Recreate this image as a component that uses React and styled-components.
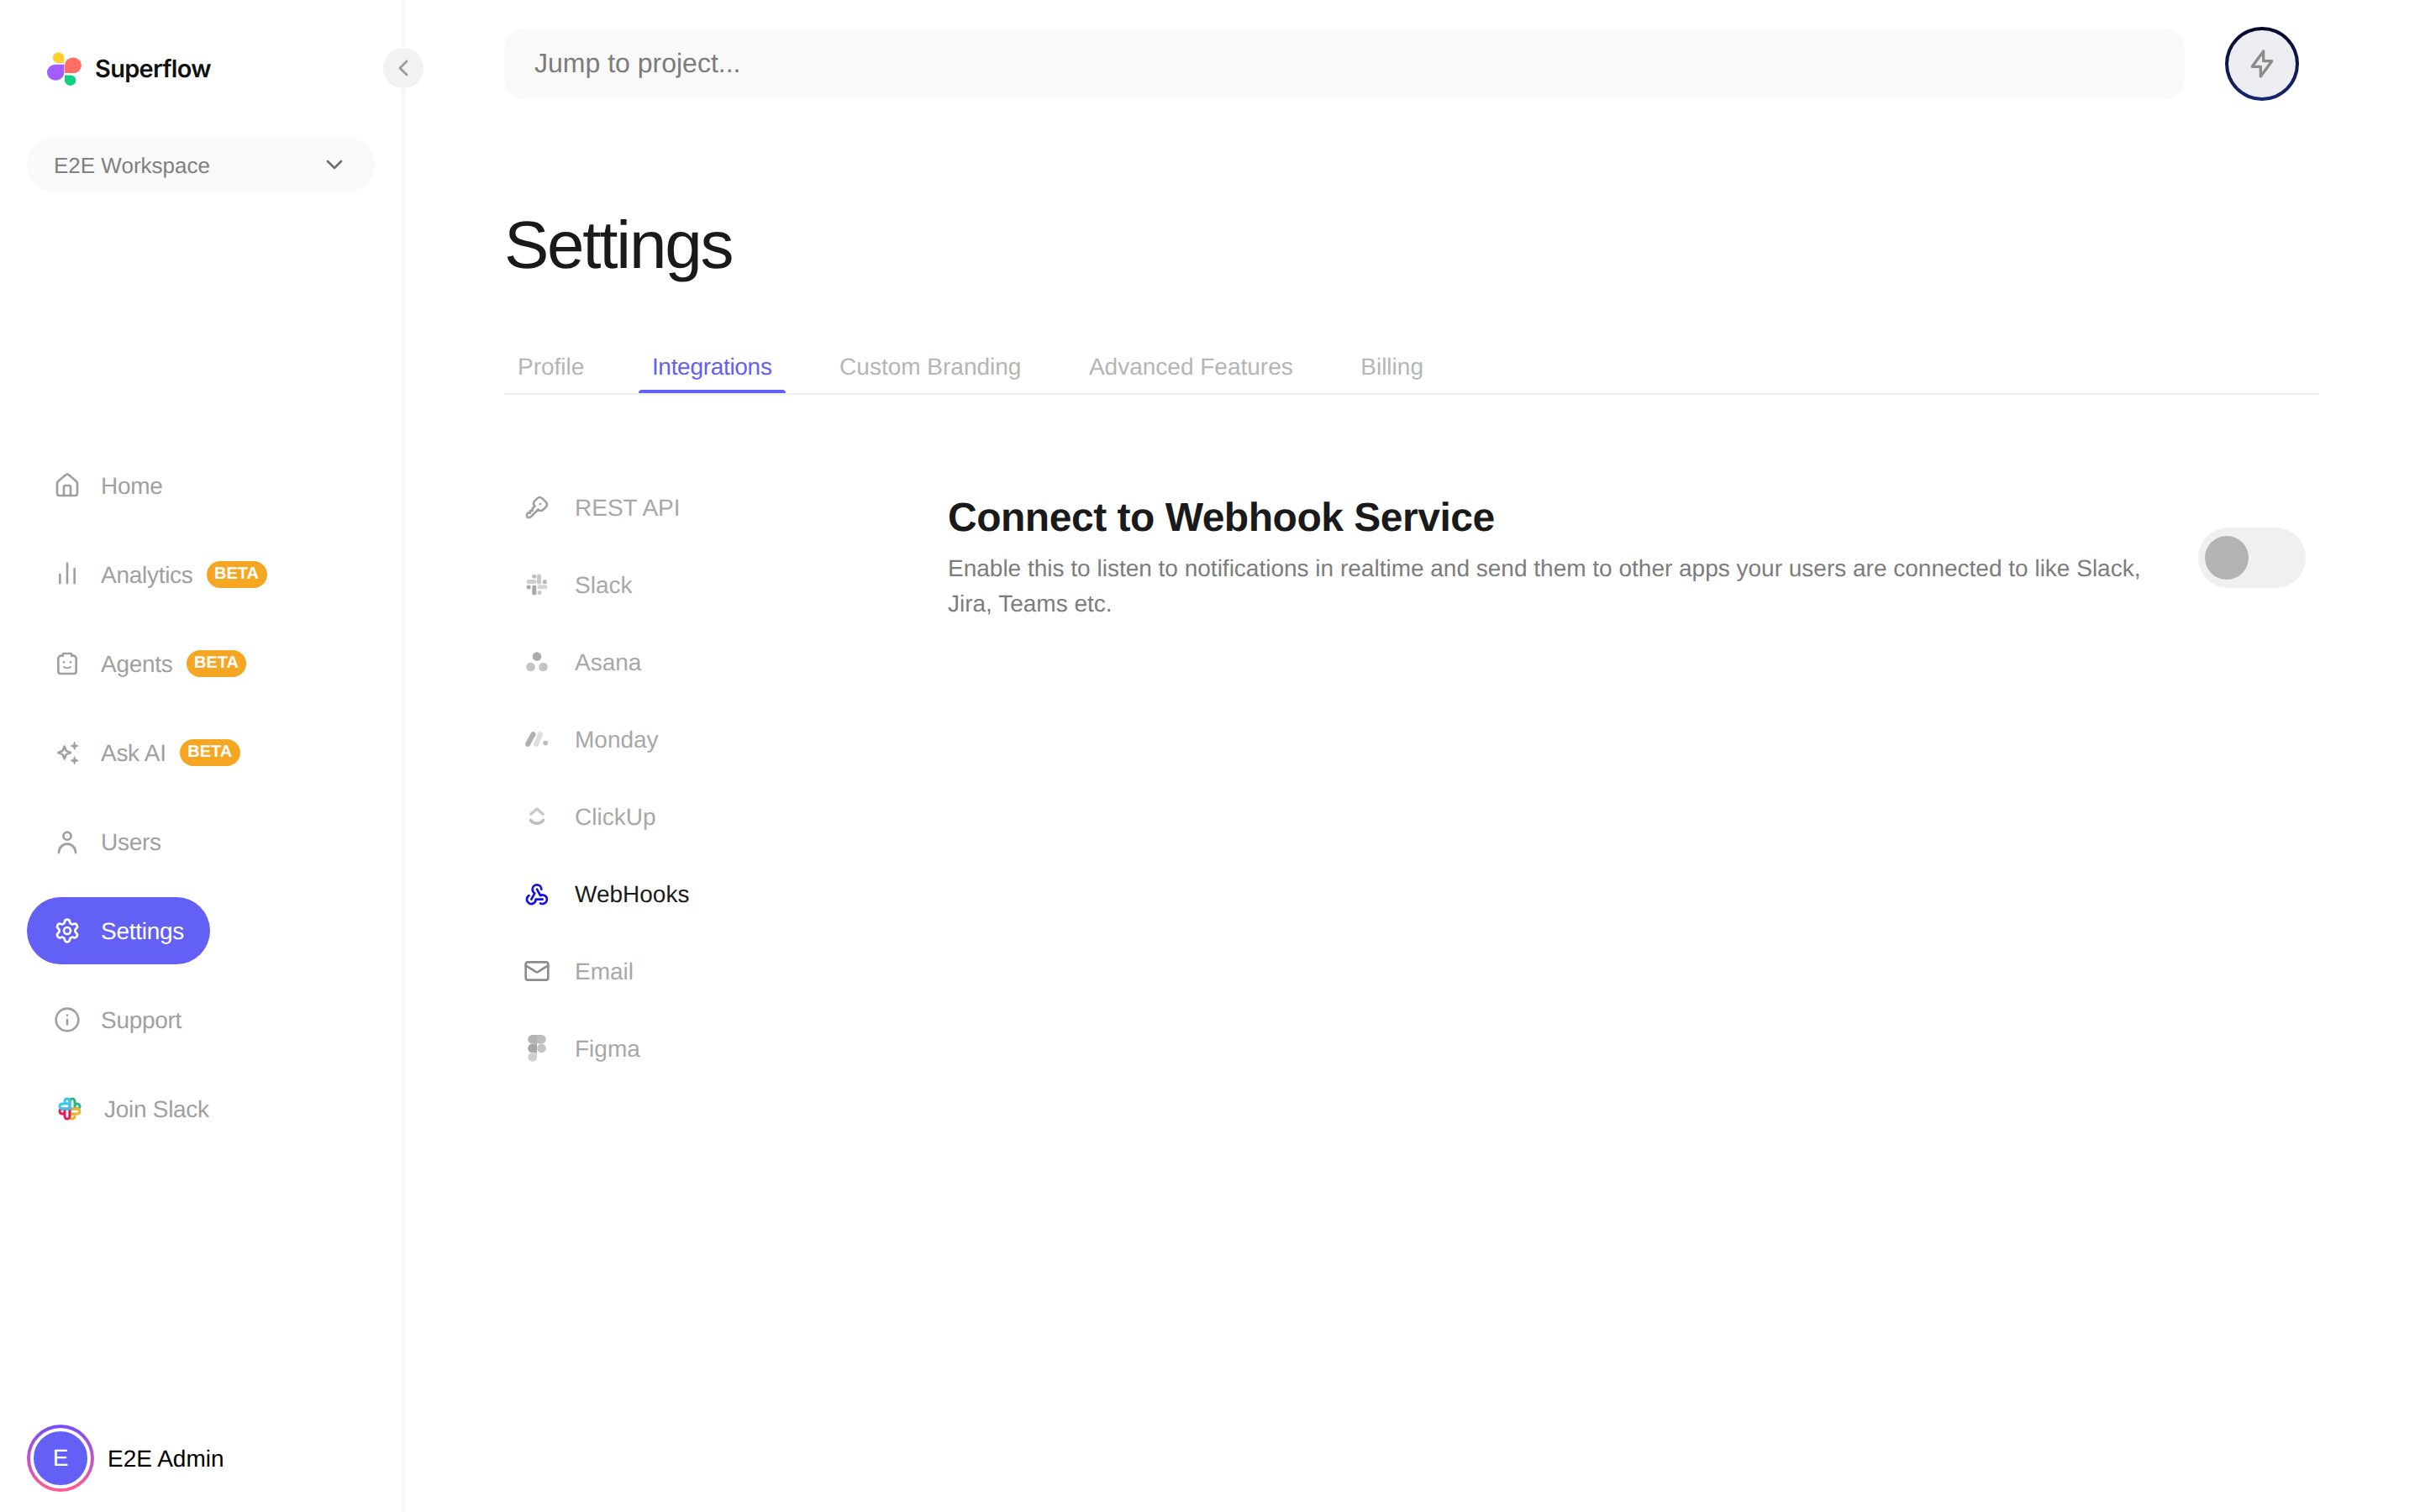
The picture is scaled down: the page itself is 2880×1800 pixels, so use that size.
import React from "react";
import styled, { createGlobalStyle } from "styled-components";
import { ChevronDown, ChevronLeft, House, Info, Mail, Settings as Gear } from "lucide-react";
import { TbBolt, TbKey, TbWebhook } from "react-icons/tb";

const Global = createGlobalStyle`
   html, body {
      margin: 0;
      padding: 0;
      background: #fff;
   }
   body {
      font-family: "Liberation Sans", Arial, sans-serif;
      text-rendering: geometricPrecision;
   }
   * {
      box-sizing: border-box;
   }
`;

const Page = styled.div`
   display: flex;
   width: 2880px;
   height: 1800px;
   overflow: hidden;
`;

const Sidebar = styled.aside`
   position: relative;
   flex: 0 0 482px;
   display: flex;
   flex-direction: column;
   padding: 62px 0 24px 32px;
   border-right: 4px solid #f8f8f8;
`;

const Brand = styled.div`
   display: flex;
   align-items: center;
   gap: 16px;
   height: 40px;
   padding-left: 24px;
`;

const BrandName = styled.span`
   margin-top: -2px;
   font-family: Inter, sans-serif;
   font-size: 29px;
   font-weight: 600;
   letter-spacing: -0.025em;
   color: #111;
`;

const Collapse = styled.button`
   position: absolute;
   top: 57px;
   right: -26px;
   width: 48px;
   height: 48px;
   display: flex;
   align-items: center;
   justify-content: center;
   padding: 0;
   border: none;
   border-radius: 50%;
   background: #f2f2f2;
   color: #999;
`;

const Workspace = styled.div`
   display: flex;
   align-items: center;
   justify-content: space-between;
   width: 414px;
   height: 64px;
   margin-top: 62px;
   padding: 0 32px;
   border-radius: 32px;
   background: #f9f9f9;
   font-size: 26px;
   color: #808080;
   svg {
      color: #6f6f6f;
   }
`;

const WorkspaceName = styled.span`
   padding-top: 3px;
`;

const Nav = styled.nav`
   display: flex;
   flex-direction: column;
   gap: 26px;
   margin-top: 310px;
`;

const NavRow = styled.div`
   display: flex;
   align-items: center;
   gap: ${p => p.$gap || 24}px;
   align-self: flex-start;
   height: 80px;
   padding: 0 31px 0 ${p => p.$inset || 32}px;
   border-radius: 40px;
   font-size: 28px;
   background: ${p => (p.$active ? "#6360f6" : "transparent")};
   color: ${p => (p.$active ? "#fff" : "#a0a0a0")};
`;

const NavLabel = styled.span`
   padding-top: 2px;
   letter-spacing: -0.01em;
`;

const Badge = styled.span`
   display: inline-flex;
   align-items: center;
   height: 32px;
   margin-left: -8px;
   padding: 0 9.5px 2px;
   border-radius: 16px;
   background: #f5a623;
   color: #fff;
   font-size: 20px;
   font-weight: 700;
`;

const Account = styled.div`
   display: flex;
   align-items: center;
   gap: 16px;
   margin-top: auto;
   font-size: 28px;
   color: #000;
`;

const AccountName = styled.span`
   padding-top: 2px;
`;

const AvatarRing = styled.div`
   width: 80px;
   height: 80px;
   padding: 4px;
   border-radius: 50%;
   background: linear-gradient(180deg, #7a4dff, #ff5f8f);
`;

const Avatar = styled.div`
   width: 72px;
   height: 72px;
   display: flex;
   align-items: center;
   justify-content: center;
   border: 4px solid #fff;
   border-radius: 50%;
   background: #6360f6;
   color: #fff;
   font-size: 28px;
`;

const Main = styled.main`
   flex: 1;
   padding: 34px 120px 0 118px;
`;

const TopBar = styled.div`
   display: flex;
   align-items: flex-start;
   gap: 48px;
   padding-right: 24px;
`;

const Search = styled.input`
   flex: 1;
   height: 84px;
   padding: 0 36px 2px;
   border: none;
   outline: none;
   border-radius: 24px;
   background: #f9f9f9;
   font-family: inherit;
   font-size: 32px;
   text-rendering: geometricPrecision;
   &::placeholder {
      color: #7c7c7c;
      opacity: 1;
   }
`;

const Bolt = styled.button`
   flex: 0 0 88px;
   height: 88px;
   margin-top: -2px;
   display: flex;
   align-items: center;
   justify-content: center;
   padding: 0;
   border: 4px solid transparent;
   border-radius: 50%;
   background: linear-gradient(#ecedf0, #ecedf0) padding-box,
      linear-gradient(180deg, #07072a, #16266e) border-box;
   color: #8c8c8c;
`;

const Title = styled.h1`
   margin: 126px 0 0;
   font-size: 80px;
   line-height: 92px;
   font-weight: 400;
   letter-spacing: -0.028em;
   color: #1a1a1a;
`;

const Tabs = styled.div`
   display: flex;
   gap: 48.5px;
   margin-top: 79px;
   border-bottom: 2px solid #f0f0f0;
`;

const Tab = styled.div`
   position: relative;
   height: 51px;
   padding: 0 16px;
   font-size: 28px;
   line-height: 40px;
   letter-spacing: ${p => (p.$active ? "-0.3px" : "0")};
   color: ${p => (p.$active ? "#6360f6" : "#b5b5b5")};
   &::after {
      content: "";
      display: ${p => (p.$active ? "block" : "none")};
      position: absolute;
      left: 0;
      right: 0;
      bottom: 0;
      height: 4px;
      border-radius: 4px 4px 0 0;
      background: #6360f6;
   }
`;

const Body = styled.div`
   display: grid;
   grid-template-columns: 528px 1fr;
   margin-top: 117px;
`;

const SubNav = styled.div`
   display: flex;
   flex-direction: column;
   gap: 60px;
   padding: 1px 0 0 23px;
`;

const SubRow = styled.div`
   display: flex;
   align-items: center;
   gap: 29px;
   height: 32px;
   font-size: 28px;
   color: ${p => (p.$active ? "#1a1a1a" : "#a8a8a8")};
`;

const SubLabel = styled.span`
   padding-top: 2px;
`;

const SubIcon = styled.span`
   flex: 0 0 32px;
   height: 32px;
   display: flex;
   align-items: center;
   justify-content: center;
   color: ${p => p.$color || "#a0a0a0"};
`;

const Panel = styled.section`
   display: flex;
   align-items: flex-start;
   gap: 48px;
   padding-right: 16px;
`;

const PanelText = styled.div`
   flex: 1;
   padding-top: 2px;
`;

const Heading = styled.h2`
   margin: 0;
   font-size: 48px;
   line-height: 56px;
   font-weight: 700;
   letter-spacing: -0.01em;
   color: #1a1a1a;
`;

const Description = styled.p`
   margin: 11px 0 0;
   font-size: 28px;
   line-height: 42px;
   color: #7c7c7c;
`;

const Toggle = styled.div`
   flex: 0 0 128px;
   height: 72px;
   margin-top: 41px;
   display: flex;
   align-items: center;
   padding-left: 8px;
   border-radius: 36px;
   background: #f0f0f0;
`;

const Knob = styled.div`
   width: 52px;
   height: 52px;
   border-radius: 50%;
   background: #b3b3b3;
`;

const NavSvg = styled.svg.attrs({
   viewBox: "0 0 24 24",
   fill: "none",
   stroke: "currentColor",
   strokeWidth: 2,
   strokeLinecap: "round",
   strokeLinejoin: "round"
})`
   width: ${p => p.$size || 32}px;
   height: ${p => p.$size || 32}px;
   flex: none;
`;

const Logo = () => (
   <svg width="41" height="40" viewBox="0 0 41 43" preserveAspectRatio="none">
      <path d="M20.4 14 H13.6 A6.8 6.8 0 1 1 20.4 7.2 Z" fill="#ffcf2d" />
      <path d="M21 27 V17 A10 10 0 1 1 31 27 Z" fill="#ff6f61" />
      <path d="M20.4 15.8 V26 A10.2 10.2 0 1 1 10.2 15.8 Z" fill="#a25cff" />
      <path d="M21 29.5 H27.7 A6.7 6.7 0 1 1 21 36.2 Z" fill="#0fd180" />
   </svg>
);

const BarsIcon = () => (
   <NavSvg strokeLinecap="butt">
      <path d="M5.5 19.7V12M12 19.7V2M18.5 19.7V7" />
   </NavSvg>
);

const AgentIcon = () => (
   <NavSvg>
      <path d="M8 5V4a1 1 0 0 1 1-1h6a1 1 0 0 1 1 1v1h1.5A2.5 2.5 0 0 1 20 7.5V19a2 2 0 0 1-2 2H6a2 2 0 0 1-2-2V7.5A2.5 2.5 0 0 1 6.5 5z" />
      <path d="M9 15c1.7 1.3 4.3 1.3 6 0" strokeWidth="1.5" />
      <circle cx="9" cy="10.7" r="1" fill="currentColor" stroke="none" />
      <circle cx="15" cy="10.7" r="1" fill="currentColor" stroke="none" />
   </NavSvg>
);

const SparkIcon = () => (
   <NavSvg>
      <path d="M9.5 6.5l1.6 3.9 3.9 1.6-3.9 1.6-1.6 3.9-1.6-3.9L4 12l3.9-1.6z" />
      <path
         d="M18.5 2.5l1 2.5 2.5 1-2.5 1-1 2.5-1-2.5-2.5-1 2.5-1zM18.5 15.5l1 2.5 2.5 1-2.5 1-1 2.5-1-2.5-2.5-1 2.5-1z"
         fill="currentColor"
         strokeWidth="0.6"
      />
   </NavSvg>
);

const UserIcon = () => (
   <NavSvg>
      <circle cx="12" cy="6.9" r="3.4" />
      <path d="M4.5 21.8a7.5 7.8 0 0 1 15 0" />
   </NavSvg>
);

const SlackColor = () => (
   <NavSvg $size={36} strokeWidth="1.7">
      <path stroke="#2eb67d" d="M12 12v-6a2 2 0 0 1 4 0v6m0-2a2 2 0 1 1 2 2h-6" />
      <path stroke="#ecb22e" d="M12 12h6a2 2 0 0 1 0 4h-6m2 0a2 2 0 1 1-2 2v-6" />
      <path stroke="#e01e5a" d="M12 12v6a2 2 0 0 1-4 0v-6m0 2a2 2 0 1 1-2-2h6" />
      <path stroke="#36c5f0" d="M12 12h-6a2 2 0 0 1 0-4h6m-2 0a2 2 0 1 1 2-2v6" />
   </NavSvg>
);

const SlackGray = () => (
   <svg width="26" height="26" viewBox="0 0 26 26" fill="none" strokeLinecap="round" strokeWidth="5">
      <path d="M3 9.5h7" stroke="#cfcfcf" />
      <path d="M9.8 3.2v.1" stroke="#bdbdbd" />
      <path d="M15.5 3v7" stroke="#c8c8c8" />
      <path d="M22.3 9.6v.1" stroke="#b5b5b5" />
      <path d="M16 15.8h7" stroke="#d6d6d6" />
      <path d="M16 22.5v.1" stroke="#c8c8c8" />
      <path d="M9.8 16v7" stroke="#a8a8a8" />
      <path d="M3.2 16v.1" stroke="#a8a8a8" />
   </svg>
);

const AsanaGray = () => (
   <svg width="26" height="24" viewBox="0 0 26 24">
      <circle cx="13" cy="5.5" r="5.3" fill="#ababab" />
      <circle cx="5.5" cy="18" r="5.3" fill="#c4c4c4" />
      <circle cx="20.5" cy="18" r="5.3" fill="#c4c4c4" />
   </svg>
);

const MondayGray = () => (
   <svg width="28" height="18" viewBox="0 0 28 18" fill="none" strokeLinecap="round" strokeWidth="6">
      <path d="M3.2 14.8L9.5 3.2" stroke="#b0b0b0" />
      <path d="M13.2 14.8L18 3.2" stroke="#dedede" />
      <circle cx="24.2" cy="13.6" r="2.9" fill="#bdbdbd" stroke="none" />
   </svg>
);

const ClickUpGray = () => (
   <svg width="20" height="22" viewBox="0 0 20 22" fill="none" strokeLinecap="round" strokeLinejoin="round" strokeWidth="3.6">
      <path d="M3 8l7-6 7 6" stroke="#c9c9c9" />
      <path d="M2.5 15.5c4 5 11 5 15 0" stroke="#bdbdbd" />
   </svg>
);

const FigmaGray = () => (
   <svg width="22" height="32" viewBox="0 0 22 32">
      <path d="M11 0H5.5a5.3 5.3 0 0 0 0 10.6H11z" fill="#b3b3b3" />
      <path d="M11 0h5.5a5.3 5.3 0 0 1 0 10.6H11z" fill="#bdbdbd" />
      <path d="M11 10.6H5.5a5.3 5.3 0 0 0 0 10.6H11z" fill="#a8a8a8" />
      <circle cx="16.5" cy="15.9" r="5.3" fill="#c4c4c4" />
      <path d="M5.5 21.2H11v5.3a5.3 5.3 0 1 1-5.5-5.3z" fill="#d0d0d0" />
   </svg>
);

const navItems = [
   { label: "Home", icon: <House size={32} /> },
   { label: "Analytics", icon: <BarsIcon />, beta: true },
   { label: "Agents", icon: <AgentIcon />, beta: true },
   { label: "Ask AI", icon: <SparkIcon />, beta: true },
   { label: "Users", icon: <UserIcon /> },
   { label: "Settings", icon: <Gear size={32} />, active: true },
   { label: "Support", icon: <Info size={32} /> }
];

const tabs = ["Profile", "Integrations", "Custom Branding", "Advanced Features", "Billing"];

const integrations = [
   { label: "REST API", icon: <TbKey size={32} /> },
   { label: "Slack", icon: <SlackGray /> },
   { label: "Asana", icon: <AsanaGray /> },
   { label: "Monday", icon: <MondayGray /> },
   { label: "ClickUp", icon: <ClickUpGray /> },
   { label: "WebHooks", icon: <TbWebhook size={32} />, active: true, color: "#1010e8" },
   { label: "Email", icon: <Mail size={32} />, color: "#8c8c8c" },
   { label: "Figma", icon: <FigmaGray /> }
];

const App = () => {
   return (
      <Page>
         <Global />
         <Sidebar>
            <Brand>
               <Logo />
               <BrandName>Superflow</BrandName>
            </Brand>
            <Collapse>
               <ChevronLeft size={32} />
            </Collapse>
            <Workspace>
               <WorkspaceName>E2E Workspace</WorkspaceName>
               <ChevronDown size={32} />
            </Workspace>
            <Nav>
               {navItems.map(item => (
                  <NavRow key={item.label} $active={item.active}>
                     {item.icon}
                     <NavLabel>{item.label}</NavLabel>
                     {item.beta && <Badge>BETA</Badge>}
                  </NavRow>
               ))}
               <NavRow $inset={33} $gap={23}>
                  <SlackColor />
                  <NavLabel>Join Slack</NavLabel>
               </NavRow>
            </Nav>
            <Account>
               <AvatarRing>
                  <Avatar>E</Avatar>
               </AvatarRing>
               <AccountName>E2E Admin</AccountName>
            </Account>
         </Sidebar>
         <Main>
            <TopBar>
               <Search placeholder="Jump to project..." />
               <Bolt>
                  <TbBolt size={40} />
               </Bolt>
            </TopBar>
            <Title>Settings</Title>
            <Tabs>
               {tabs.map(tab => (
                  <Tab key={tab} $active={tab === "Integrations"}>
                     {tab}
                  </Tab>
               ))}
            </Tabs>
            <Body>
               <SubNav>
                  {integrations.map(item => (
                     <SubRow key={item.label} $active={item.active}>
                        <SubIcon $color={item.color}>{item.icon}</SubIcon>
                        <SubLabel>{item.label}</SubLabel>
                     </SubRow>
                  ))}
               </SubNav>
               <Panel>
                  <PanelText>
                     <Heading>Connect to Webhook Service</Heading>
                     <Description>
                        Enable this to listen to notifications in realtime and send them to other apps your users are
                        connected to like Slack, Jira, Teams etc.
                     </Description>
                  </PanelText>
                  <Toggle>
                     <Knob />
                  </Toggle>
               </Panel>
            </Body>
         </Main>
      </Page>
   );
};

export default App;
